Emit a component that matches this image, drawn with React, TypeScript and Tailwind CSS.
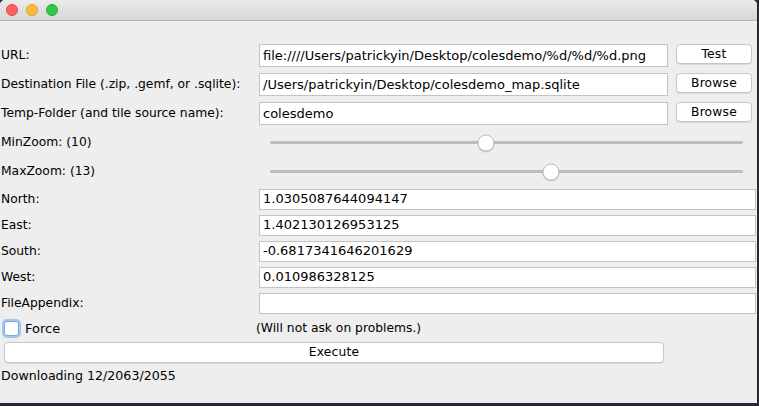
import React from 'react';

const font = { fontFamily: '"DejaVu Sans", "Liberation Sans", sans-serif' };

function Field({ value, className = '' }: { value: string; className?: string }) {
  return (
    <div className={`bg-white border border-[#c3c3c3] flex items-center pl-[3px] text-[13px] text-black whitespace-nowrap overflow-hidden ${className}`}>
      {value}
    </div>
  );
}

function MacButton({ label, className = '' }: { label: string; className?: string }) {
  return (
    <div className={`bg-white border border-[#c6c6c6] rounded-[4px] shadow-[0_1px_0_rgba(0,0,0,0.08)] flex items-center justify-center text-[12.3px] tracking-[0.2px] text-black ${className}`}>
      {label}
    </div>
  );
}

function Slider({ pos }: { pos: number }) {
  return (
    <div className="relative w-full h-full flex items-center px-[12px]">
      <div className="w-full h-[3px] rounded-full bg-[#bdbdbd]" />
      <div
        className="absolute top-1/2 -translate-y-1/2 -translate-x-1/2 w-[17px] h-[17px] rounded-full bg-white border border-[#bcbcbc] shadow-[0_1px_1px_rgba(0,0,0,0.15)]"
        style={{ left: pos }}
      />
    </div>
  );
}

export default function App() {
  const fileRows = [
    { label: 'URL:', value: 'file:////Users/patrickyin/Desktop/colesdemo/%d/%d/%d.png', btn: 'Test' },
    { label: 'Destination File (.zip, .gemf, or .sqlite):', value: '/Users/patrickyin/Desktop/colesdemo_map.sqlite', btn: 'Browse' },
    { label: 'Temp-Folder (and tile source name):', value: 'colesdemo', btn: 'Browse' },
  ];
  const coordRows = [
    { label: 'North:', value: '1.0305087644094147' },
    { label: 'East:', value: '1.402130126953125' },
    { label: 'South:', value: '-0.6817341646201629' },
    { label: 'West:', value: '0.010986328125' },
    { label: 'FileAppendix:', value: '' },
  ];

  return (
    <div className="w-[759px] h-[406px] bg-[#2a2733] flex flex-col overflow-hidden" style={font}>
      <div className="w-[757px] h-[403px] flex flex-col bg-[#eeeeee] rounded-t-[5px] overflow-hidden">
        {/* title bar */}
        <div className="h-[21px] shrink-0 bg-gradient-to-b from-[#ebebeb] to-[#d6d6d6] border-b border-[#b8b8b8] flex items-center gap-[8px] pl-[6px]">
          <div className="w-[12px] h-[12px] rounded-full bg-[#fc605c] border border-[#e2463f]" />
          <div className="w-[12px] h-[12px] rounded-full bg-[#fdbc40] border border-[#e1a116]" />
          <div className="w-[12px] h-[12px] rounded-full bg-[#34c84a] border border-[#27aa35]" />
        </div>

        <div className="flex flex-col pt-[20px] text-[12.3px] text-black">
          {fileRows.map((r) => (
            <div key={r.label} className="h-[29px] flex items-center">
              <div className="w-[259px] shrink-0 pl-[1px] whitespace-nowrap">{r.label}</div>
              <Field value={r.value} className="w-[409px] h-[23px]" />
              <MacButton label={r.btn} className="ml-[8px] w-[76px] h-[20px] -mt-[3px]" />
            </div>
          ))}

          <div className="h-[29px] flex items-center">
            <div className="w-[258px] shrink-0 pl-[1px]">MinZoom: (10)</div>
            <div className="w-[497px] h-full">
              <Slider pos={228} />
            </div>
          </div>
          <div className="h-[29px] flex items-center">
            <div className="w-[258px] shrink-0 pl-[1px]">MaxZoom: (13)</div>
            <div className="w-[497px] h-full">
              <Slider pos={293} />
            </div>
          </div>

          {coordRows.map((r) => (
            <div key={r.label} className="h-[26px] flex items-center">
              <div className="w-[259px] shrink-0 pl-[1px]">{r.label}</div>
              <Field value={r.value} className="w-[497px] h-[21px]" />
            </div>
          ))}

          <div className="h-[25px] flex items-center">
            <div className="w-[256px] shrink-0 flex items-center pl-[4px]">
              <div className="w-[15px] h-[15px] rounded-[3px] bg-white border border-[#7fa9e6] shadow-[0_0_0_2px_rgba(108,160,240,0.55)]" />
              <span className="ml-[6px] text-[13px]">Force</span>
            </div>
            <div>(Will not ask on problems.)</div>
          </div>

          <div className="h-[22px] flex items-center pl-[4px]">
            <MacButton label="Execute" className="w-[660px] h-[21px]" />
          </div>

          <div className="h-[26px] flex items-center pl-[1px] text-[12.6px]">Downloading 12/2063/2055</div>
        </div>
      </div>
    </div>
  );
}
